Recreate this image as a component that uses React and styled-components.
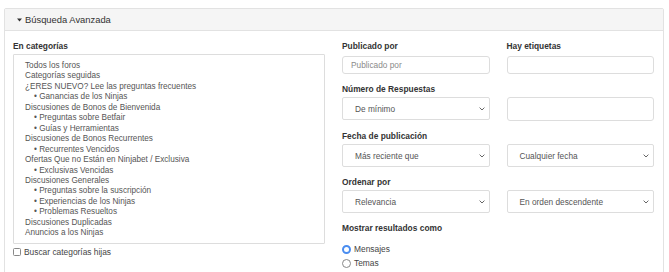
import React from "react";
import styled, { createGlobalStyle } from "styled-components";

const categories = [
  { name: "Todos los foros" },
  { name: "Categorías seguidas" },
  { name: "¿ERES NUEVO? Lee las preguntas frecuentes" },
  { name: "Ganancias de los Ninjas", sub: true },
  { name: "Discusiones de Bonos de Bienvenida" },
  { name: "Preguntas sobre Betfair", sub: true },
  { name: "Guías y Herramientas", sub: true },
  { name: "Discusiones de Bonos Recurrentes" },
  { name: "Recurrentes Vencidos", sub: true },
  { name: "Ofertas Que no Están en Ninjabet / Exclusiva" },
  { name: "Exclusivas Vencidas", sub: true },
  { name: "Discusiones Generales" },
  { name: "Preguntas sobre la suscripción", sub: true },
  { name: "Experiencias de los Ninjas", sub: true },
  { name: "Problemas Resueltos", sub: true },
  { name: "Discusiones Duplicadas" },
  { name: "Anuncios a los Ninjas" },
];

const Chevron = () => (
  <svg width="6" height="4" viewBox="0 0 6 4">
    <path d="M0.6 0.6 L3 3 L5.4 0.6" fill="none" stroke="#666" strokeWidth="1" />
  </svg>
);

const SelectBox = ({ children }) => (
  <FakeSelect>
    <span>{children}</span>
    <Chevron />
  </FakeSelect>
);

const App = () => {
  return (
    <>
      <GlobalStyle />
      <Page>
        <Panel>
          <PanelHeader>
            <svg width="5" height="4" viewBox="0 0 5 4">
              <path d="M0 0.5 H5 L2.5 3.5 Z" fill="#333" />
            </svg>
            Búsqueda Avanzada
          </PanelHeader>
          <PanelBody>
            <Column>
              <Label>En categorías</Label>
              <ListBox>
                {categories.map((c) => (
                  <ListItem key={c.name} sub={c.sub}>
                    {c.sub ? "• " : ""}
                    {c.name}
                  </ListItem>
                ))}
              </ListBox>
              <CheckRow>
                <CheckBox />
                Buscar categorías hijas
              </CheckRow>
            </Column>
            <Column>
              <Pair>
                <div>
                  <Label>Publicado por</Label>
                  <TextInput placeholder="Publicado por" />
                </div>
                <div>
                  <Label>Hay etiquetas</Label>
                  <TextInput />
                </div>
              </Pair>
              <Label>Número de Respuestas</Label>
              <Pair>
                <SelectBox>De mínimo</SelectBox>
                <TextInput tall />
              </Pair>
              <Label>Fecha de publicación</Label>
              <Pair>
                <SelectBox>Más reciente que</SelectBox>
                <SelectBox>Cualquier fecha</SelectBox>
              </Pair>
              <Label>Ordenar por</Label>
              <Pair>
                <SelectBox>Relevancia</SelectBox>
                <SelectBox>En orden descendente</SelectBox>
              </Pair>
              <Label>Mostrar resultados como</Label>
              <RadioList>
                <RadioRow>
                  <Radio checked />
                  Mensajes
                </RadioRow>
                <RadioRow>
                  <Radio />
                  Temas
                </RadioRow>
              </RadioList>
            </Column>
          </PanelBody>
        </Panel>
      </Page>
    </>
  );
};

export default App;

const GlobalStyle = createGlobalStyle`
  body {
    margin: 0;
    background: #fff;
    font-family: "Liberation Sans", Arial, sans-serif;
    color: #333;
    overflow: hidden;
  }
`;

const Page = styled.div`
  padding: 8px 5px 0 4px;
`;

const Panel = styled.div`
  width: 660px;
  border: 1px solid #e2e2e2;
  border-radius: 2px 2px 0 0;
  box-sizing: border-box;
`;

const PanelHeader = styled.div`
  display: flex;
  align-items: center;
  gap: 3px;
  height: 21px;
  padding-left: 12px;
  background: #f5f5f5;
  border-bottom: 1px solid #e2e2e2;
  font-size: 9.4px;
  color: #333;
`;

const PanelBody = styled.div`
  display: grid;
  grid-template-columns: 1fr 1fr;
  column-gap: 17px;
  padding: 10px 9px 20px 8px;
`;

const Column = styled.div`
  display: flex;
  flex-direction: column;
`;

const Label = styled.div`
  font-size: 8.4px;
  font-weight: bold;
  line-height: 10px;
  margin-bottom: 3px;
  color: #333;
`;

const ListBox = styled.div`
  height: 190px;
  box-sizing: border-box;
  border: 1px solid #ddd;
  border-radius: 1px;
  padding: 6px 0 0 11px;
`;

const ListItem = styled.div`
  font-size: 8.2px;
  line-height: 10.45px;
  color: #555;
  white-space: nowrap;
  padding-left: ${(p) => (p.sub ? "9px" : "0")};
`;

const CheckRow = styled.label`
  display: flex;
  align-items: center;
  gap: 3px;
  margin-top: 3px;
  font-size: 8.4px;
  color: #444;
`;

const CheckBox = styled.span`
  width: 8px;
  height: 8px;
  box-sizing: border-box;
  border: 1px solid #888;
  border-radius: 1.5px;
  background: #fff;
`;

const Pair = styled.div`
  display: grid;
  grid-template-columns: 1fr 1fr;
  column-gap: 17px;
  margin-bottom: 10px;
`;

const TextInput = styled.input`
  width: 100%;
  height: ${(p) => (p.tall ? "24px" : "18px")};
  box-sizing: border-box;
  border: 1px solid #ddd;
  border-radius: 3px;
  padding: 0 8px;
  margin: 0;
  font-family: inherit;
  font-size: 8.3px;
  color: #555;
  outline: none;
  &::placeholder {
    color: #8a8a8a;
  }
`;

const FakeSelect = styled.div`
  display: flex;
  align-items: center;
  justify-content: space-between;
  height: 23px;
  box-sizing: border-box;
  border: 1px solid #ddd;
  border-radius: 2px;
  padding: 0 4px 0 12px;
  font-size: 8.3px;
  color: #555;
  background: #fff;
`;

const RadioList = styled.div`
  display: flex;
  flex-direction: column;
  gap: 4px;
  margin-top: 8px;
`;

const RadioRow = styled.label`
  display: flex;
  align-items: center;
  gap: 3px;
  height: 10px;
  font-size: 8.4px;
  color: #444;
`;

const Radio = styled.span`
  width: 9px;
  height: 9px;
  box-sizing: border-box;
  border-radius: 50%;
  border: ${(p) => (p.checked ? "2.5px solid #4a8df0" : "1px solid #888")};
  background: #fff;
`;
